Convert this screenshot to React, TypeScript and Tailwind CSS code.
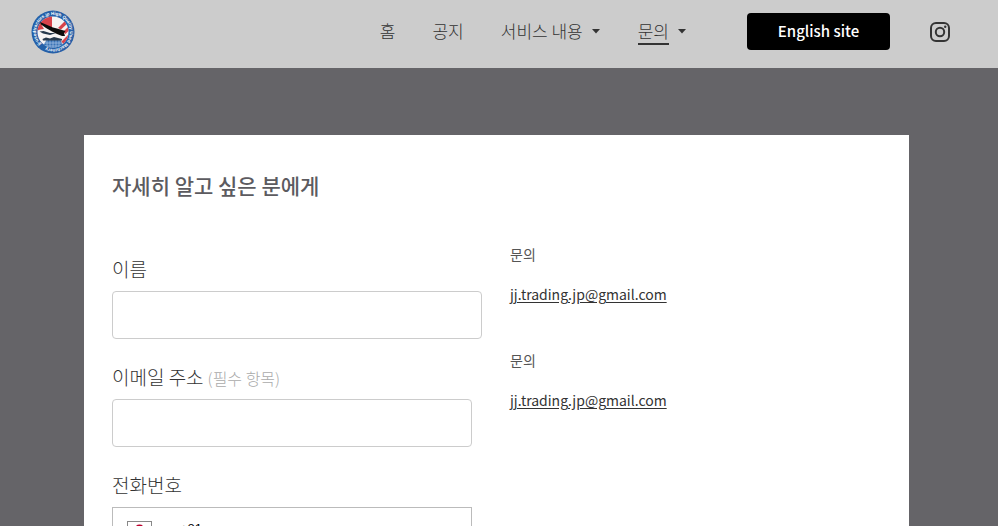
import { useState } from "react";
import type { ReactNode } from "react";

type NavItem = {
  label: string;
  href: string;
  hasMenu?: boolean;
  active?: boolean;
};

const NAV_ITEMS: NavItem[] = [
  { label: "홈", href: "#home" },
  { label: "공지", href: "#news" },
  { label: "서비스 내용", href: "#services", hasMenu: true },
  { label: "문의", href: "#contact", hasMenu: true, active: true },
];

const EMAIL = "jj.trading.jp@gmail.com";

function Logo() {
  return (
    <svg viewBox="0 0 88 88" className="size-11" role="img" aria-label="JJ Trading">
      <defs>
        <clipPath id="logo-inner">
          <circle cx="44" cy="44" r="31" />
        </clipPath>
        {/* starts at the lower left and runs clockwise */}
        <path id="logo-ring" d="M20 68 A34 34 0 1 1 68 68 A34 34 0 0 1 20 68" />
      </defs>
      <circle cx="44" cy="44" r="43" fill="#2560a8" />
      <circle cx="44" cy="44" r="31" fill="#f6f3f3" />
      <g clipPath="url(#logo-inner)">
        <path d="M8 8H42V36L20 28L26 38C20 38 16 40 10 42Z" fill="#d8434b" />
        <path d="M54 36L70 20L75 25L60 39Z" fill="#d8434b" />
        <path d="M64 44L77 31L80 37L69 48Z" fill="#d8434b" />
        <path d="M60 64L78 46L80 54L66 69Z" fill="#d8434b" />
        <path d="M32 58H58L68 80H20Z" fill="#3973b6" />
        <path
          d="M26 66H64M22 72H66M32 60V80M38 60V80M44 60V80M50 60V80M56 60V80"
          stroke="#b9d2ec"
          strokeWidth="1.2"
        />
      </g>
      <path d="M17 43L25 42L38 46L50 46L38 50L24 47Z" fill="#26384c" />
      <path d="M23 58L30 55L38 57L46 54L62 58V61H24Z" fill="#26384c" />
      <path
        d="M18 24L30 29L44 35L52 37L62 40L69 42L66 46L68 52L62 52L52 48L42 43L30 36L20 29Z"
        fill="#0c0c0c"
      />
      <text fill="#fff" fontSize="9" fontWeight="700" fontFamily="Liberation Sans, sans-serif">
        <textPath href="#logo-ring">jj-usedtractors.jp High Quality Used Machinery</textPath>
      </text>
    </svg>
  );
}

function InstagramIcon() {
  return (
    <svg viewBox="0 0 20 20" className="size-5" fill="none" stroke="#333" strokeWidth="2" aria-hidden="true">
      <rect x="1" y="1" width="18" height="18" rx="5" />
      <circle cx="10" cy="10" r="4.2" />
      <circle cx="15.2" cy="4.8" r="1.2" fill="#333" stroke="none" />
    </svg>
  );
}

function NavLink({ item }: { item: NavItem }) {
  return (
    <li className="flex items-center gap-2">
      <a
        href={item.href}
        aria-current={item.active ? "page" : undefined}
        className={
          item.active
            ? "border-b-2 border-[#333] leading-6"
            : "border-b-2 border-transparent leading-6"
        }
      >
        {item.label}
      </a>
      {item.hasMenu && (
        <svg viewBox="0 0 10 5" className="h-[5px] w-[10px]" aria-hidden="true">
          <path d="M1 0H9L5 4.5Z" fill="#333" />
        </svg>
      )}
    </li>
  );
}

function Field({ id, label, hint, children }: { id: string; label: string; hint?: string; children: ReactNode }) {
  return (
    <div>
      <label htmlFor={id} className="flex h-7 items-baseline text-[19px] leading-7 font-light text-[#333]">
        {label}
        {hint && <span className="ml-1 text-[16px] leading-4 text-[#aaa]">{hint}</span>}
      </label>
      <div className="mt-2">{children}</div>
    </div>
  );
}

function Contact() {
  return (
    <div>
      <h2 className="text-[14px] leading-6 text-[#555]">문의</h2>
      <a href={`mailto:${EMAIL}`} className="mt-4 inline-block text-[14px] leading-6 text-[#333] underline underline-offset-2">
        {EMAIL}
      </a>
    </div>
  );
}

export default function App() {
  const [phone, setPhone] = useState("+81");

  return (
    <div className="h-screen overflow-hidden bg-white pr-0.5 font-['Noto_Sans_CJK_KR',sans-serif]">
      <header className="flex h-[68px] items-center justify-between bg-[#ccc] pr-12 pb-[5px] pl-[31px]">
        <a href="#home">
          <Logo />
        </a>
        <div className="flex items-center">
          <nav aria-label="Main">
            <ul className="flex items-center gap-[37px] text-[17px] font-light text-[#333]">
              {NAV_ITEMS.map((item) => (
                <NavLink key={item.href} item={item} />
              ))}
            </ul>
          </nav>
          <a
            href="#english"
            className="ml-[60px] flex h-[37px] w-[143px] items-center justify-center rounded bg-black text-[15px] font-medium text-white"
          >
            English site
          </a>
          <a href="#instagram" aria-label="Instagram" className="ml-10">
            <InstagramIcon />
          </a>
        </div>
      </header>

      <main className="min-h-full bg-[#656468] pt-[67px] pr-[89px] pl-[84px]">
        <section className="bg-white px-7 pt-[34px] pb-20">
          <h1 className="text-[21px] leading-8 font-medium text-[#5c5b60]">자세히 알고 싶은 분에게</h1>
          <div className="mt-[41px] grid grid-cols-[370fr_371fr] gap-7">
            <form className="flex flex-col gap-6 pt-[13px]">
              <Field id="name" label="이름">
                <input id="name" type="text" className="block h-12 w-full rounded border border-[#ccc] px-3" />
              </Field>
              <Field id="email" label="이메일 주소" hint="(필수 항목)">
                <div className="pr-[10px]">
                  <input id="email" type="email" required className="block h-12 w-full rounded border border-[#ccc] px-3" />
                </div>
              </Field>
              <Field id="phone" label="전화번호">
                <div className="mr-[10px] flex h-12 items-start border border-[#bbb] pt-[13px] pl-[14px]">
                  <svg viewBox="0 0 25 17" className="h-[17px] w-[25px]" aria-hidden="true">
                    <rect x="0.5" y="0.5" width="24" height="16" fill="#fff" stroke="#888" />
                    <circle cx="12.5" cy="8.5" r="5" fill="#bc002d" />
                  </svg>
                  <input
                    id="phone"
                    type="tel"
                    value={phone}
                    onChange={(e) => setPhone(e.target.value)}
                    className="ml-7 min-w-0 flex-1 font-['Liberation_Sans',sans-serif] text-[13px] leading-none outline-none"
                  />
                </div>
              </Field>
            </form>
            <div className="flex flex-col gap-[42px]">
              <Contact />
              <Contact />
            </div>
          </div>
        </section>
      </main>
    </div>
  );
}
